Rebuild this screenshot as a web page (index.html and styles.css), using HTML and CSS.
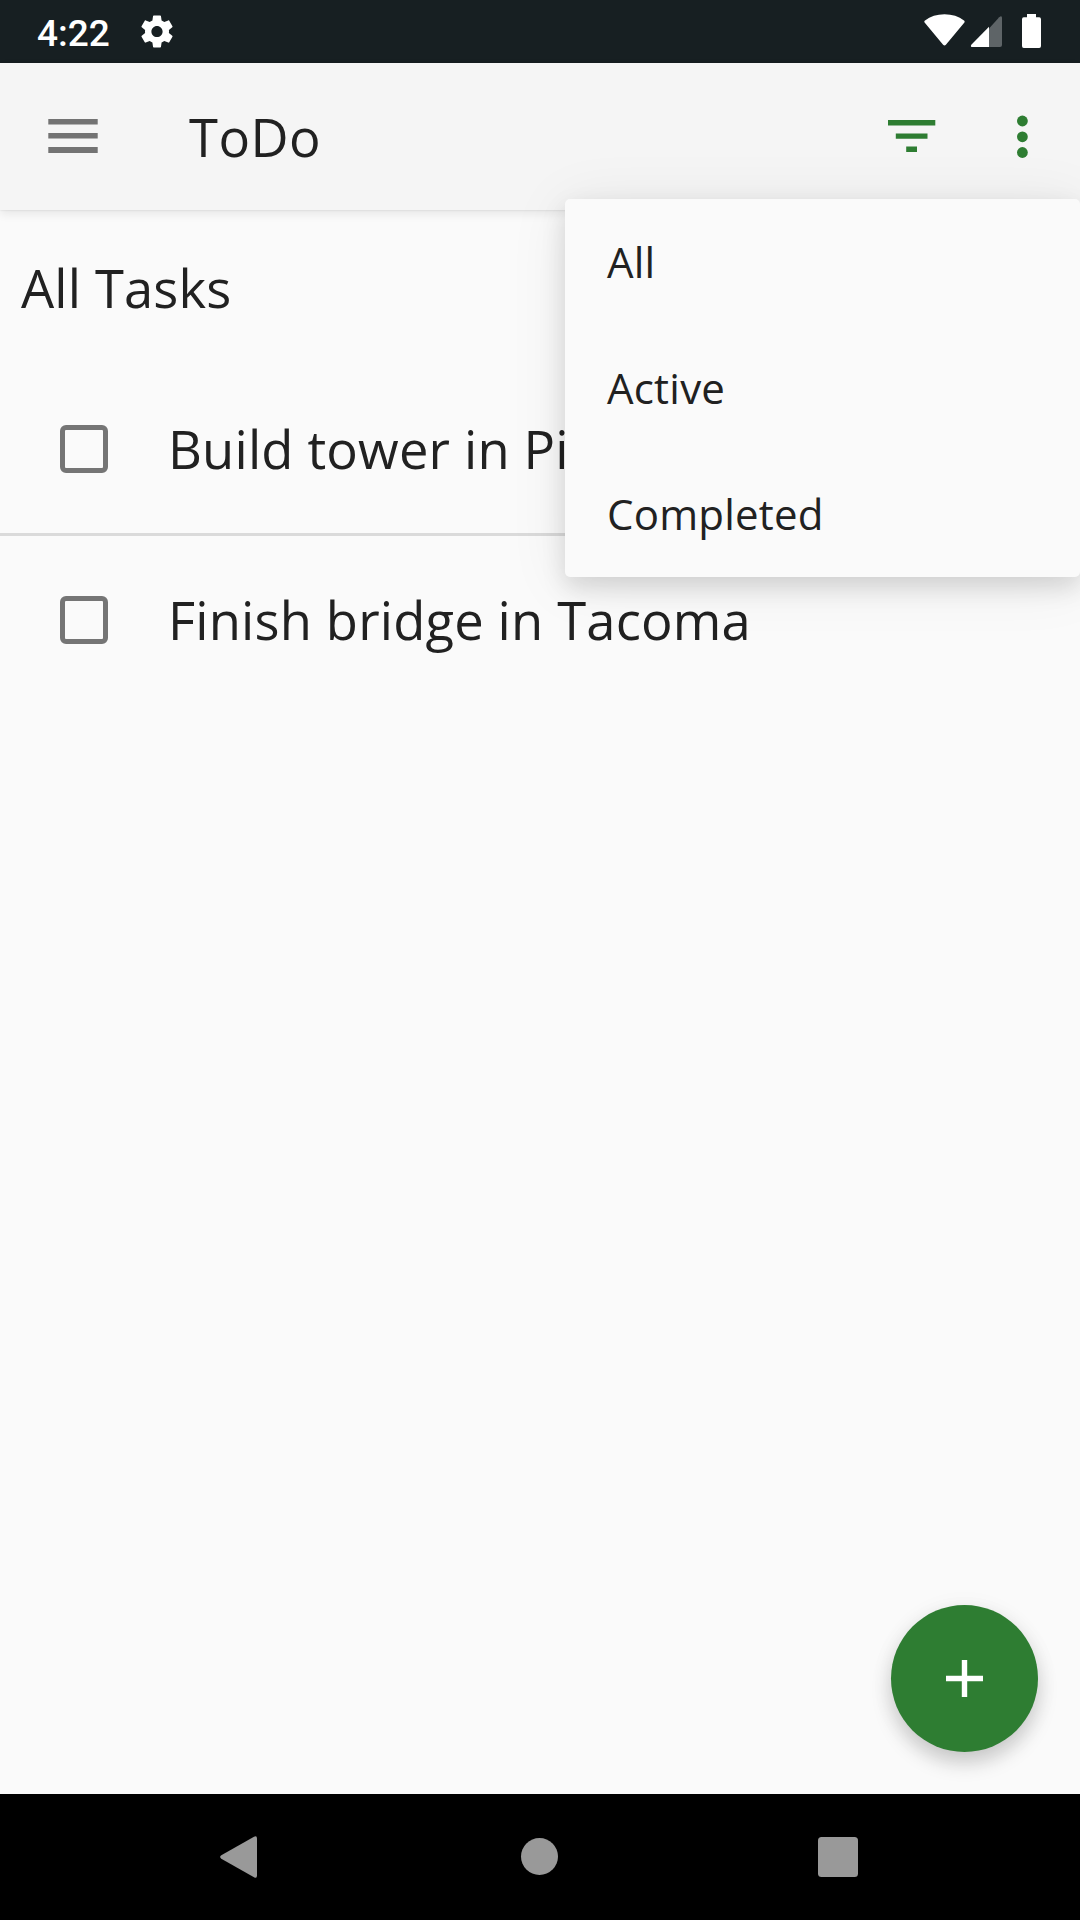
FILE: index.html
```html
<!DOCTYPE html>
<html lang="en">
<head>
<meta charset="utf-8">
<title>ToDo</title>
<link rel="stylesheet" href="styles.css">
</head>
<body>
<div class="screen">
  <header class="status">
    <span class="clock">4:22</span>
    <svg class="gear" viewBox="2 2 20 20"><path fill="#fff" d="M19.43 12.98c.04-.32.07-.64.07-.98s-.03-.66-.07-.98l2.11-1.65c.19-.15.24-.42.12-.64l-2-3.46c-.12-.22-.39-.3-.61-.22l-2.49 1c-.52-.4-1.08-.73-1.69-.98l-.38-2.65C14.46 2.18 14.25 2 14 2h-4c-.25 0-.46.18-.49.42l-.38 2.65c-.61.25-1.17.59-1.69.98l-2.49-1c-.23-.09-.49 0-.61.22l-2 3.46c-.13.22-.07.49.12.64l2.11 1.65c-.04.32-.07.65-.07.98s.03.66.07.98l-2.11 1.65c-.19.15-.24.42-.12.64l2 3.46c.12.22.39.3.61.22l2.49-1c.52.4 1.08.73 1.69.98l.38 2.65c.03.24.24.42.49.42h4c.25 0 .46-.18.49-.42l.38-2.65c.61-.25 1.17-.59 1.69-.98l2.49 1c.23.09.49 0 .61-.22l2-3.46c.12-.22.07-.49-.12-.64l-2.11-1.65zM12 15.5c-1.93 0-3.5-1.57-3.5-3.5s1.57-3.5 3.5-3.5 3.5 1.57 3.5 3.5-1.57 3.5-3.5 3.5z"/></svg>
    <svg class="signals" viewBox="0 0 120 36">
      <path fill="#fff" d="M.8 8.700Q-.3 7.500 1 6.500Q9 .3 20.500.3T40 6.500Q41.200 7.500 40.200 8.700L21.900 30.800Q20.500 32.200 19.100 30.800Z"/>
      <path fill="#5e6467" d="M65 14.500L75.200 3.200Q78 .8 78 4V31Q78 33 76 33H65Z"/>
      <path fill="#fff" d="M65 12.800V33H48.500Q46 33 47.300 30.700Z"/>
      <path fill="#fff" d="M103 0H112V3.300H115.200Q117 3.300 117 5.200V32Q117 34 115.200 34H99.800Q98 34 98 32V5.200Q98 3.300 99.800 3.300H103Z"/>
    </svg>
  </header>
  <div class="toolbar">
    <svg class="menu-icon" viewBox="0 0 50 34"><path fill="#737373" d="M.3 0H49.700V5.500H.3ZM.3 14H49.700V19.500H.3ZM.3 28H49.700V34H.3Z"/></svg>
    <h1 class="title">ToDo</h1>
    <svg class="filter" viewBox="0 0 48 32"><path fill="#2e7d32" d="M0 0H47.300V5.500H0ZM7.800 13.500H39.500V18.700H7.800ZM18.200 26.500H29V32H18.200Z"/></svg>
    <svg class="more" viewBox="0 0 12 44"><g fill="#2e7d32"><circle cx="6.400" cy="6" r="5.400"/><circle cx="6.400" cy="21.800" r="5.400"/><circle cx="6.400" cy="37.500" r="5.400"/></g></svg>
  </div>
  <main class="content">
    <h2 class="heading">All Tasks</h2>
    <ul class="tasks">
      <li class="task"><span class="box"></span><span>Build tower in Pisa</span></li>
      <li class="task"><span class="box"></span><span>Finish bridge in Tacoma</span></li>
    </ul>
  </main>
  <footer class="nav">
    <svg class="back" viewBox="0 0 38 42"><path fill="#999" d="M1.300 19.300L34 .7Q37-.8 37 2.500V39.500Q37 43 34 41.300L1.300 22.700Q-1 21 1.300 19.300Z"/></svg>
    <svg class="home" viewBox="0 0 38 38"><circle cx="19.500" cy="18.500" r="18.500" fill="#999"/></svg>
    <svg class="recents" viewBox="0 0 40 40"><rect width="40" height="40" rx="3.500" fill="#999"/></svg>
  </footer>
  <div class="popup">
    <div class="option">All</div>
    <div class="option">Active</div>
    <div class="option">Completed</div>
  </div>
  <div class="fab"><svg class="plus" viewBox="0 0 37 37"><path fill="#fff" d="M15.800 0H21.200V15.800H37V21.200H21.200V37H15.800V21.200H0V15.800H15.800Z"/></svg></div>
</div>
</body>
</html>
```
FILE: styles.css
```css
* { box-sizing: border-box; }
body { margin: 0; }
svg { display: block; flex: none; }
.screen {
  position: relative;
  display: flex;
  flex-direction: column;
  width: 1080px;
  height: 1920px;
  overflow: hidden;
  background: #fafafa;
  color: #212121;
  font-family: "Open Sans", sans-serif;
}
.status {
  display: flex;
  align-items: flex-start;
  height: 63px;
  padding-left: 37px;
  background: #171f22;
}
.clock {
  width: 104px;
  padding-top: 12px;
  color: #fff;
  font: 500 37px/44px Roboto, sans-serif;
}
.gear { width: 32px; height: 33px; margin-top: 15px; }
.signals { width: 120px; height: 36px; margin: 14px 0 0 751px; }
.toolbar {
  position: relative;
  display: flex;
  align-items: flex-start;
  height: 147px;
  padding-left: 48px;
  background: #f5f5f5;
  box-shadow: 0 0 2px rgba(0, 0, 0, .12), 0 4px 9px rgba(0, 0, 0, .08);
}
.menu-icon { width: 50px; height: 34px; margin-top: 56px; }
.title {
  width: 697px;
  margin: 38px 0 0 91px;
  font-size: 52.5px;
  font-weight: 400;
  line-height: 72px;
  letter-spacing: .5px;
}
.filter { width: 48px; height: 32px; margin: 57px 0 0 2px; }
.more { width: 12px; height: 44px; margin: 52px 0 0 80px; }
.content { flex: 1; }
.heading {
  margin: 42px 0 0 21px;
  font-size: 52.5px;
  font-weight: 400;
  line-height: 72px;
  letter-spacing: .15px;
}
.tasks { margin: 41px 0 0; padding: 0; list-style: none; }
.task {
  display: flex;
  align-items: center;
  gap: 60px;
  height: 171px;
  padding-left: 60px;
  border-bottom: 3px solid #dadada;
  font-size: 52.5px;
  line-height: 72px;
  letter-spacing: .17px;
  white-space: nowrap;
}
.task:last-child { border-color: transparent; }
.box {
  width: 48px;
  height: 48px;
  border: 5px solid #757575;
  border-radius: 6px;
}
.nav {
  display: flex;
  align-items: flex-start;
  height: 126px;
  padding-left: 220px;
  background: #000;
}
.back { width: 38px; height: 42px; margin-top: 42px; }
.home { width: 38px; height: 38px; margin: 44px 0 0 262px; }
.recents { width: 40px; height: 40px; margin: 43px 0 0 260px; }
.popup {
  position: absolute;
  top: 199px;
  left: 565px;
  width: 515px;
  height: 378px;
  border-radius: 5px;
  background: #fafafa;
  box-shadow: 0 10px 24px rgba(0, 0, 0, .13), 0 6px 60px rgba(0, 0, 0, .08);
}
.option {
  height: 126px;
  padding-left: 42px;
  font-size: 42px;
  line-height: 126px;
  letter-spacing: .22px;
}
.fab {
  position: absolute;
  top: 1605px;
  left: 891px;
  display: flex;
  align-items: center;
  justify-content: center;
  width: 147px;
  height: 147px;
  border-radius: 50%;
  background: #2e7d32;
  box-shadow: 0 11px 20px rgba(0, 0, 0, .18), 0 3px 24px rgba(0, 0, 0, .05);
}
.plus { width: 37px; height: 37px; }
```
